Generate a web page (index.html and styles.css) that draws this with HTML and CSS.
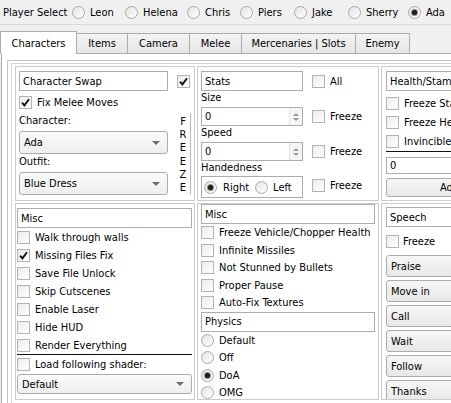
FILE: index.html
```html
<!DOCTYPE html>
<html>
<head>
<meta charset="utf-8">
<link rel="stylesheet" href="styles.css">
</head>
<body>
<div class="app">
  <div class="players">
    <span class="title">Player Select</span>
    <label class="opt pw-leon"><span class="rb"></span>Leon</label>
    <label class="opt pw-helena"><span class="rb"></span>Helena</label>
    <label class="opt pw-chris"><span class="rb"></span>Chris</label>
    <label class="opt pw-piers"><span class="rb"></span>Piers</label>
    <label class="opt pw-jake"><span class="rb"></span>Jake</label>
    <label class="opt pw-sherry"><span class="rb"></span>Sherry</label>
    <label class="opt"><span class="rb on"></span>Ada</label>
  </div>
  <div class="tabs">
    <div class="tab active w-char">Characters</div>
    <div class="tab w-items">Items</div>
    <div class="tab w-camera">Camera</div>
    <div class="tab w-melee">Melee</div>
    <div class="tab w-merc">Mercenaries | Slots</div>
    <div class="tab w-enemy">Enemy</div>
  </div>
  <div class="pane">
    <div class="scroll">
      <div class="frame">
        <div class="grid">
          <!-- Panel 1 -->
          <div class="panel p1">
            <div class="row">
              <div class="tb w149">Character Swap</div>
              <span class="cb ml9"><svg viewBox="0 0 11 11"><path d="M2 5.6 L4.4 8.4 L9 2.2"/></svg></span>
            </div>
            <label class="chk mt5"><span class="cb"><svg viewBox="0 0 11 11"><path d="M2 5.6 L4.4 8.4 L9 2.2"/></svg></span>Fix Melee Moves</label>
            <div class="cols">
              <div class="col149">
                <div class="lab mt1">Character:</div>
                <div class="sel mt3"><span>Ada</span><span class="arrow"></span></div>
                <div class="lab mt1">Outfit:</div>
                <div class="sel mt3"><span>Blue Dress</span><span class="arrow"></span></div>
              </div>
              <div class="freeze">
                <span>F</span><span>R</span><span>E</span><span>E</span><span>Z</span><span>E</span>
              </div>
            </div>
          </div>
          <!-- Panel 2 -->
          <div class="panel p2">
            <div class="row">
              <div class="tb w102">Stats</div>
              <label class="chk ml9"><span class="cb"></span>All</label>
            </div>
            <div class="lab">Size</div>
            <div class="row mt2">
              <div class="spin w102"><span class="v">0</span><span class="arrows"><span class="up"></span><span class="dn"></span></span></div>
              <label class="chk ml9"><span class="cb"></span>Freeze</label>
            </div>
            <div class="lab">Speed</div>
            <div class="row mt2">
              <div class="spin w102"><span class="v">0</span><span class="arrows"><span class="up"></span><span class="dn"></span></span></div>
              <label class="chk ml9"><span class="cb"></span>Freeze</label>
            </div>
            <div class="lab">Handedness</div>
            <div class="row mt1">
              <div class="radios w102">
                <label class="opt r1"><span class="rb on"></span>Right</label>
                <label class="opt r2"><span class="rb"></span>Left</label>
              </div>
              <label class="chk ml9 hand"><span class="cb"></span>Freeze</label>
            </div>
          </div>
          <!-- Panel 3 -->
          <div class="panel p3">
            <div class="tb">Health/Stamina</div>
            <div class="rows19 mt3">
              <label class="chk"><span class="cb"></span>Freeze Stamina</label>
              <label class="chk"><span class="cb"></span>Freeze Health</label>
              <label class="chk"><span class="cb"></span>Invincible</label>
            </div>
            <div class="hr"></div>
            <div class="tb small mt5">0</div>
            <div class="btn mt4">Add Stamina</div>
          </div>
          <!-- Panel 4 -->
          <div class="panel p4">
            <div class="tb">Misc</div>
            <div class="rows18">
              <label class="chk"><span class="cb"></span>Walk through walls</label>
              <label class="chk"><span class="cb plain"><svg viewBox="0 0 11 11"><path d="M2 5.6 L4.4 8.4 L9 2.2"/></svg></span>Missing Files Fix</label>
              <label class="chk"><span class="cb"></span>Save File Unlock</label>
              <label class="chk"><span class="cb"></span>Skip Cutscenes</label>
              <label class="chk"><span class="cb"></span>Enable Laser</label>
              <label class="chk"><span class="cb"></span>Hide HUD</label>
              <label class="chk"><span class="cb"></span>Render Everything</label>
            </div>
            <div class="hr"></div>
            <div class="rows18">
              <label class="chk"><span class="cb"></span>Load following shader:</label>
            </div>
            <div class="sel short mt1"><span>Default</span><span class="arrow"></span></div>
          </div>
          <!-- Panel 5 -->
          <div class="panel p5">
            <div class="tb">Misc</div>
            <div class="rows17">
              <label class="chk"><span class="cb"></span>Freeze Vehicle/Chopper Health</label>
              <label class="chk"><span class="cb"></span>Infinite Missiles</label>
              <label class="chk"><span class="cb"></span>Not Stunned by Bullets</label>
              <label class="chk"><span class="cb"></span>Proper Pause</label>
              <label class="chk"><span class="cb"></span>Auto-Fix Textures</label>
            </div>
            <div class="tb">Physics</div>
            <div class="rows17">
              <label class="opt"><span class="rb"></span>Default</label>
              <label class="opt"><span class="rb"></span>Off</label>
              <label class="opt"><span class="rb on"></span>DoA</label>
              <label class="opt"><span class="rb"></span>OMG</label>
            </div>
          </div>
          <!-- Panel 6 -->
          <div class="panel p6">
            <div class="tb">Speech</div>
            <label class="chk mt8 gap4"><span class="cb"></span>Freeze</label>
            <div class="speech">
              <div class="btn left">Praise</div>
              <div class="btn left">Move in</div>
              <div class="btn left">Call</div>
              <div class="btn left">Wait</div>
              <div class="btn left">Follow</div>
              <div class="btn left">Thanks</div>
            </div>
          </div>
        </div>
      </div>
    </div>
  </div>
</div>
</body>
</html>
```

FILE: styles.css
```css
* { box-sizing: border-box; }
html, body { margin: 0; padding: 0; }
body {
  background: #f0f0f0;
  font-family: "DejaVu Sans Condensed", "DejaVu Sans", "Liberation Sans", sans-serif;
  font-stretch: condensed;
  font-size: 11px;
  color: #000;
  width: 451px;
  height: 403px;
  overflow: hidden;
}
.app { width: 620px; }

/* top player bar */
.players {
  display: flex;
  align-items: center;
  height: 25px;
  padding-left: 3px;
  border-bottom: 1px solid #dadada;
}
.players .title { width: 69px; flex: none; white-space: nowrap; }
.opt { display: flex; align-items: center; margin-right: 11px; white-space: nowrap; }
.players .opt { margin-right: 0; flex: none; }
.pw-leon { width: 53px; }
.pw-helena { width: 62px; }
.pw-chris { width: 53px; }
.pw-piers { width: 54px; }
.pw-jake { width: 54px; }
.pw-sherry { width: 60px; }
.opt .rb { margin-right: 5px; }
.rb {
  width: 13px; height: 13px; flex: none;
  border: 1px solid #a9a9a9; border-radius: 50%;
  background: linear-gradient(135deg, #e4e4e4, #ffffff);
  display: flex; align-items: center; justify-content: center;
}
.rb.on::after {
  content: ""; width: 5px; height: 5px; border-radius: 50%;
  background: #1c1c1c; box-shadow: 0 0 0 1px #8a8a8a;
}

/* tabs */
.tabs {
  display: flex; align-items: flex-end;
  margin-top: 6px; height: 22px; padding-left: 1px;
  position: relative; z-index: 1;
}
.tab {
  height: 20px; margin-left: -1px;
  display: flex; align-items: center; justify-content: center;
  border: 1px solid #acacac; border-bottom: none;
  background: linear-gradient(#f3f3f3, #e6e6e6);
  white-space: nowrap;
}
.tab.active { height: 23px; margin-bottom: -1px; background: #fff; }
.w-char { width: 77px; }
.w-items { width: 52px; }
.w-camera { width: 63px; }
.w-melee { width: 53px; }
.w-merc { width: 115px; }
.w-enemy { width: 55px; }

/* pane */
.pane {
  margin-left: 1px;
  border: 1px solid #acacac;
  background: #fff;
  padding: 6px 5px 5px 5px;
}
.scroll { border: 1px solid #c4c4c4; padding: 2px 3px 3px 3px; }
.frame { border: 1px solid #d6d6d6; padding: 2px 3px 3px 3px; }
.grid {
  display: grid;
  grid-template-columns: 180px 182px 180px;
  grid-template-rows: 135px 197px;
  column-gap: 2px; row-gap: 2px;
}
.panel { border: 1px solid #cbcbcb; overflow: hidden; }
.p1 { padding: 4px 3px 0 3px; }
.p2 { padding: 4px 3px 0 3px; }
.p3 { padding: 4px 3px 0 4px; }
.p4 { padding: 4px 2px 0 1px; }
.p5 { padding: 0 3px 0 3px; }
.p6 { padding: 3px 3px 0 4px; }

.row { display: flex; align-items: center; }
.cols { display: flex; margin-top: 4px; }
.col149 { width: 149px; }
.w149 { width: 149px; }
.w102 { width: 102px; }
.ml9 { margin-left: 9px; }
.mt1 { margin-top: 1px; }
.mt2 { margin-top: 2px; }
.mt3 { margin-top: 3px; }
.mt4 { margin-top: 4px; }
.mt5 { margin-top: 5px; }
.mt8 { margin-top: 8px; }

.lab { height: 14px; line-height: 14px; }

/* text box */
.tb {
  height: 20px; border: 1px solid #abadb3; background: #fff;
  padding-left: 3px; display: flex; align-items: center; white-space: nowrap;
}
.tb.small { height: 17px; }

/* checkbox */
.chk { display: flex; align-items: center; white-space: nowrap; }
.chk .cb { margin-right: 5px; }
.chk.gap4 .cb { margin-right: 4px; }
.cb {
  width: 13px; height: 13px; flex: none;
  border: 1px solid #b3b3b3;
  background: linear-gradient(135deg, #ececec, #ffffff);
  display: flex; align-items: center; justify-content: center;
}
.cb svg { width: 11px; height: 11px; }
.cb path { fill: none; stroke: #141414; stroke-width: 1.9; }
.chk.hand { align-self: flex-start; margin-top: 3px; }

/* select */
.sel {
  height: 23px; border: 1px solid #acacac; border-radius: 3px;
  background: linear-gradient(#fafafa, #efefef);
  display: flex; align-items: center; justify-content: space-between;
  padding: 0 7px 0 4px;
}
.sel.short { height: 20px; }
.arrow {
  width: 0; height: 0;
  border-left: 4px solid transparent; border-right: 4px solid transparent;
  border-top: 4px solid #6b6b6b;
}

/* freeze column */
.freeze {
  width: 14px; margin-left: 9px;
  border-right: 1px solid #b8b8b8;
  display: flex; flex-direction: column; align-items: center;
  padding-top: 2px; padding-right: 1px;
}
.freeze span { line-height: 13.2px; height: 13.2px; }

/* spin box */
.spin {
  height: 19px; border: 1px solid #abadb3; background: #fff;
  display: flex; align-items: stretch;
}
.spin .v { flex: 1; padding-left: 3px; display: flex; align-items: center; }
.spin .arrows {
  width: 13px; display: flex; flex-direction: column; justify-content: center; align-items: center; gap: 2px;
  background: #f5f5f5; border-left: 1px solid #e3e3e3;
}
.spin .up {
  width: 0; height: 0;
  border-left: 3px solid transparent; border-right: 3px solid transparent;
  border-bottom: 3px solid #9a9a9a;
}
.spin .dn {
  width: 0; height: 0;
  border-left: 3px solid transparent; border-right: 3px solid transparent;
  border-top: 3px solid #9a9a9a;
}

/* radio frame */
.radios {
  height: 22px; border: 1px solid #abadb3; background: #fff;
  display: flex; align-items: center; padding-left: 2px;
}
.radios .r1 { margin-right: 6px; }
.radios .r1 .rb { margin-right: 6px; }
.radios .r2 { margin-right: 0; }

/* rows */
.rows19 > * { height: 19px; }
.rows18 > * { height: 18px; }
.rows17 > * { height: 17.5px; }
.hr { height: 1px; background: #111; }

/* buttons */
.btn {
  height: 19px; border: 1px solid #acacac; border-radius: 3px;
  background: linear-gradient(#f7f7f7, #e8e8e8);
  display: flex; align-items: center; justify-content: center; white-space: nowrap;
}
.btn.left { justify-content: flex-start; padding-left: 4px; height: 22px; margin-top: 3px; }
.speech { margin-top: 7px; }
```
